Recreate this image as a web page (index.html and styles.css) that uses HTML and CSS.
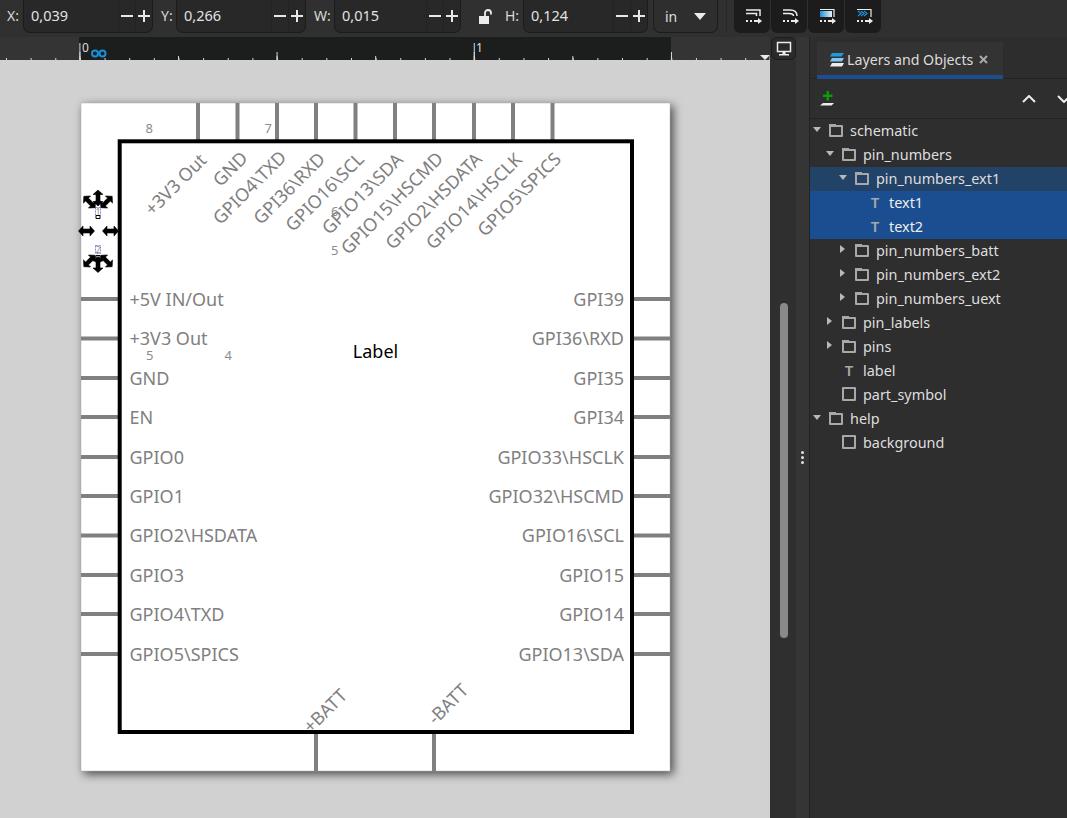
FILE: index.html
```html
<!DOCTYPE html>
<html lang="en">
<head>
<meta charset="utf-8">
<title>Layers and Objects</title>
<link rel="stylesheet" href="styles.css">
</head>
<body>
<div class="app">
  <header class="toolbar">
    <span class="lbl lbl-x">X:</span>
    <div class="field f-x"><span class="val">0,039</span><i class="step minus"></i><i class="step plus"></i></div>
    <span class="lbl lbl-y">Y:</span>
    <div class="field f-y"><span class="val">0,266</span><i class="step minus"></i><i class="step plus"></i></div>
    <span class="lbl lbl-w">W:</span>
    <div class="field f-w"><span class="val">0,015</span><i class="step minus"></i><i class="step plus"></i></div>
    <div class="lock">
      <svg width="14" height="16" viewBox="0 0 14 16"><path class="ico-fill" d="M1 7h10v8H1z"/><path class="ico-line" d="M7 7V4a3 3 0 0 1 6 0v1.500" stroke-width="1.800"/></svg>
    </div>
    <span class="lbl lbl-h">H:</span>
    <div class="field f-h"><span class="val">0,124</span><i class="step minus"></i><i class="step plus"></i></div>
    <div class="unit"><span>in</span><svg width="12" height="7" viewBox="0 0 12 7"><path class="ico-fill" d="M0 0h12L6 7z"/></svg></div>
    <div class="sep"></div>
    <div class="btn-group">
      <div class="tbtn"><svg width="36" height="33" viewBox="0 0 36 33">
        <path class="ico-line" d="M12 10H26V16M12 13.500H22.500V16" stroke-width="1.500"/>
        <path class="ico-line" d="M12 21H14M16 21H18M20 21H25" stroke-width="1.800"/><path class="ico-fill" d="M24 18l4 3-4 3z"/></svg></div>
      <div class="tbtn"><svg width="36" height="33" viewBox="0 0 36 33">
        <path class="ico-line" d="M12 10H19Q26 10 26 16M12 13.500H18Q22.500 13.500 22.500 16" stroke-width="1.500"/>
        <path class="ico-line" d="M12 21H14M16 21H18M20 21H25" stroke-width="1.800"/><path class="ico-fill" d="M24 18l4 3-4 3z"/></svg></div>
      <div class="tbtn"><svg width="36" height="33" viewBox="0 0 36 33">
        <defs><linearGradient id="bluefade"><stop offset="0" stop-color="#1b8fd8"/><stop offset="1" stop-color="#e6f2fa"/></linearGradient></defs>
        <path fill="url(#bluefade)" d="M12 11H24V17H12z"/>
        <path class="ico-line" d="M12 9.500H26V17" stroke-width="1.200"/>
        <path class="ico-line" d="M12 21H14M16 21H18M20 21H25" stroke-width="1.800"/><path class="ico-fill" d="M24 18l4 3-4 3z"/></svg></div>
      <div class="tbtn"><svg width="36" height="33" viewBox="0 0 36 33">
        <path class="ico-blue" d="M13 11l3 2.500-3 2.500M16 11l3 2.500-3 2.500M19 11l3 2.500-3 2.500" stroke-width="1.200"/>
        <path class="ico-line" d="M12 9.500H26V17" stroke-width="1.200"/>
        <path class="ico-line" d="M12 21H14M16 21H18M20 21H25" stroke-width="1.800"/><path class="ico-fill" d="M24 18l4 3-4 3z"/></svg></div>
    </div>
  </header>

  <div class="main">
    <section class="work">
      <div class="ruler">
        <span class="rnum rnum-0">0</span>
        <span class="rnum rnum-1">1</span>
        <svg class="guide-mark" width="16" height="9" viewBox="0 0 16 9"><circle class="ico-blue" cx="4" cy="4.500" r="3" stroke-width="2"/><circle class="ico-blue" cx="11.500" cy="4.500" r="3" stroke-width="2"/></svg>
        <svg class="ruler-mark" width="10" height="5" viewBox="0 0 10 5"><path class="ico-fill" d="M0 0h10L5 5z"/></svg>
      </div>
      <svg class="canvas" width="770" height="758" viewBox="0 60 770 758">
        <rect class="page" x="81" y="103" width="589" height="668"/>

        <g class="pins">
          <path d="M198 103V140M237.500 103V140M277 103V140M316 103V140M355.500 103V140M395 103V140M434 103V140M474 103V140M513 103V140M552.500 103V140"/>
          <path d="M81 299H118M81 338.500H118M81 378H118M81 417H118M81 457H118M81 496H118M81 535.500H118M81 575H118M81 614H118M81 654H118"/>
          <path d="M634 299H670M634 338.500H670M634 378H670M634 417H670M634 457H670M634 496H670M634 535.500H670M634 575H670M634 614H670M634 654H670"/>
          <path d="M316 734V771M434 734V771"/>
        </g>
        <rect class="body" x="119.700" y="141.300" width="512.300" height="590.700"/>

        <g class="num">
          <text x="145.500" y="133">8</text>
          <text x="264.500" y="133">7</text>
          <text x="146" y="360">5</text>
          <text x="224.500" y="360">4</text>
          <text x="331" y="216">6</text>
          <text x="331" y="255">5</text>
        </g>

        <g class="plabel" transform="translate(-.5 .5)">
          <text x="130" y="305">+5V IN/Out</text>
          <text x="130" y="344.500">+3V3 Out</text>
          <text x="130" y="384">GND</text>
          <text x="130" y="423">EN</text>
          <text x="130" y="463">GPIO0</text>
          <text x="130" y="502">GPIO1</text>
          <text x="130" y="541.500">GPIO2\HSDATA</text>
          <text x="130" y="581">GPIO3</text>
          <text x="130" y="620">GPIO4\TXD</text>
          <text x="130" y="660">GPIO5\SPICS</text>
        </g>
        <g class="plabel end" transform="translate(0 .5)">
          <text x="624" y="305">GPI39</text>
          <text x="624" y="344.500">GPI36\RXD</text>
          <text x="624" y="384">GPI35</text>
          <text x="624" y="423">GPI34</text>
          <text x="624" y="463">GPIO33\HSCLK</text>
          <text x="624" y="502">GPIO32\HSCMD</text>
          <text x="624" y="541.500">GPIO16\SCL</text>
          <text x="624" y="581">GPIO15</text>
          <text x="624" y="620">GPIO14</text>
          <text x="624" y="660">GPIO13\SDA</text>
        </g>
        <g class="plabel" transform="translate(2.500 2.500)">
          <text transform="translate(150 214) rotate(-45)">+3V3 Out</text>
          <text transform="translate(218 185) rotate(-45)">GND</text>
          <text transform="translate(218 223) rotate(-45)">GPIO4\TXD</text>
          <text transform="translate(258.500 223) rotate(-45)">GPI36\RXD</text>
          <text transform="translate(290.500 230) rotate(-45)">GPIO16\SCL</text>
          <text transform="translate(327 233) rotate(-45)">GPIO13\SDA</text>
          <text transform="translate(346 253) rotate(-45)">GPIO15\HSCMD</text>
          <text transform="translate(390.500 248) rotate(-45)">GPIO2\HSDATA</text>
          <text transform="translate(431 248) rotate(-45)">GPIO14\HSCLK</text>
          <text transform="translate(482.500 235) rotate(-45)">GPIO5\SPICS</text>
        </g>
        <g class="plabel">
          <text transform="translate(311 734) rotate(-45)">+BATT</text>
          <text transform="translate(435.500 725.500) rotate(-45)">-BATT</text>
        </g>
        <text class="part-label" x="375.500" y="358">Label</text>

        <g class="sel-text">
          <text x="98" y="215">1</text>
          <text x="98" y="253">2</text>
        </g>
        <path class="sel-box" d="M95.500 207.500h5v8h-5zM95.500 245.500h5v8h-5z"/>
        <path class="sel-node" d="M96 215.500h4v3h-4zM96 255.500h4v3h-4z"/>
        <defs>
          <path id="handle" d="M-8 0l4.500-5v3h7v-3L8 0 3.500 5v-3h-7v3z"/>
        </defs>
        <g class="handles">
          <use href="#handle" transform="translate(98 198) rotate(90)"/>
          <use href="#handle" transform="translate(89.500 202) rotate(45)"/>
          <use href="#handle" transform="translate(106.500 202) rotate(-45)"/>
          <use href="#handle" transform="translate(86.500 231)"/>
          <use href="#handle" transform="translate(110.500 231)"/>
          <use href="#handle" transform="translate(98 264.500) rotate(90)"/>
          <use href="#handle" transform="translate(89.500 261) rotate(-45)"/>
          <use href="#handle" transform="translate(106.500 261) rotate(45)"/>
        </g>
      </svg>
    </section>

    <div class="vscroll">
      <div class="track">
        <div class="display-btn">
          <svg width="16" height="15" viewBox="0 0 16 15"><path class="ico-line" d="M1.500 1.500h13v9h-13z" stroke-width="1.500"/><path class="ico-fill" d="M3 13h10v1.500H3zM6.500 11h3v2h-3z"/></svg>
        </div>
        <div class="thumb"></div>
      </div>
      <div class="grip"><i></i><i></i><i></i></div>
    </div>

    <aside class="panel">
      <div class="tabs">
        <div class="tab">
          <svg width="16" height="14" viewBox="0 0 16 14">
            <path fill="#1f9bdc" d="M3 0h12l-2.500 3.500H1z"/>
            <path fill="#7cc8ee" d="M3 5h12l-2 3.500H1z"/>
            <path fill="#eeeeee" d="M3 10h12l-2 3.500H1z"/>
          </svg>
          <span>Layers and Objects</span>
          <svg class="tab-x" width="9" height="9" viewBox="0 0 9 9"><path d="M1 1l7 7M8 1L1 8"/></svg>
        </div>
      </div>
      <div class="panel-tools">
        <svg width="16" height="16" viewBox="0 0 16 16"><path fill="#0a9a0a" d="M6.500 0h2.500v3.500h3.500V6H9v3.500H6.500V6H3V3.500h3.500z"/><path class="ico-fill" d="M3 12h11l-2.500 2.500H0z"/></svg>
        <div class="chevrons">
          <svg width="14" height="8" viewBox="0 0 14 8"><path class="ico-line" d="M1 7l6-6 6 6" stroke-width="2"/></svg>
          <svg width="14" height="8" viewBox="0 0 14 8"><path class="ico-line" d="M1 1l6 6 6-6" stroke-width="2"/></svg>
        </div>
      </div>
      <ul class="tree">
        <li class="row l0"><i class="arrow open"></i><i class="ic folder"></i><span>schematic</span></li>
        <li class="row l1"><i class="arrow open"></i><i class="ic folder"></i><span>pin_numbers</span></li>
        <li class="row l2 hl"><i class="arrow open"></i><i class="ic folder"></i><span>pin_numbers_ext1</span></li>
        <li class="row l3 sel"><i class="arrow"></i><i class="ic ttype">T</i><span>text1</span></li>
        <li class="row l3 sel"><i class="arrow"></i><i class="ic ttype">T</i><span>text2</span></li>
        <li class="row l2"><i class="arrow shut"></i><i class="ic folder"></i><span>pin_numbers_batt</span></li>
        <li class="row l2"><i class="arrow shut"></i><i class="ic folder"></i><span>pin_numbers_ext2</span></li>
        <li class="row l2"><i class="arrow shut"></i><i class="ic folder"></i><span>pin_numbers_uext</span></li>
        <li class="row l1"><i class="arrow shut"></i><i class="ic folder"></i><span>pin_labels</span></li>
        <li class="row l1"><i class="arrow shut"></i><i class="ic folder"></i><span>pins</span></li>
        <li class="row l1"><i class="arrow"></i><i class="ic ttype">T</i><span>label</span></li>
        <li class="row l1"><i class="arrow"></i><i class="ic square"></i><span>part_symbol</span></li>
        <li class="row l0"><i class="arrow open"></i><i class="ic folder"></i><span>help</span></li>
        <li class="row l1"><i class="arrow"></i><i class="ic square"></i><span>background</span></li>
      </ul>
    </aside>
  </div>
</div>
</body>
</html>
```

FILE: styles.css
```css
* { box-sizing: border-box; }
html, body { margin: 0; height: 100%; overflow: hidden; background: #2e2e2e; }
body { font-family: "Noto Sans", "Open Sans", sans-serif; font-size: 14px; color: #dedede; }
.app { width: 1067px; height: 818px; display: flex; flex-direction: column; overflow: hidden; }

.ico-fill { fill: #ececec; }
.ico-line { fill: none; stroke: #ececec; }
.ico-blue { fill: none; stroke: #1a8fd6; }

/* Top toolbar */
.toolbar { height: 37px; flex: none; display: flex; align-items: flex-start; background: #303030; padding-left: 7px; }
.lbl { height: 33px; line-height: 32px; color: #d8d8d8; flex: none; }
.lbl-x { width: 16px; }
.lbl-y { width: 15px; margin-left: 8px; }
.lbl-w { width: 20px; margin-left: 8px; }
.lbl-h { width: 18px; }
.field { height: 33px; flex: none; margin-top: 0; display: flex; align-items: stretch; background: #282828; border: 1px solid #1c1c1c; border-top: 0; border-radius: 0 0 7px 7px; }
.f-x, .f-y { width: 130px; }
.f-w { width: 127px; }
.f-h { width: 125px; }
.val { flex: 1; padding-left: 7px; line-height: 31px; font-size: 14.500px; color: #e2e2e2; }
.step { width: 17px; flex: none; border-left: 1px solid #232323; display: block; }
.minus { background: linear-gradient(#e8e8e8, #e8e8e8) center 15px / 12px 2px no-repeat; }
.plus {
  background:
    linear-gradient(#e8e8e8, #e8e8e8) center 15px / 12px 2px no-repeat,
    linear-gradient(#e8e8e8, #e8e8e8) center 10px / 2px 12px no-repeat;
}
.lock { width: 44px; height: 33px; flex: none; display: flex; align-items: center; padding-left: 17px; }
.unit { width: 65px; height: 33px; flex: none; margin-left: 5px; display: flex; align-items: center; justify-content: space-between; padding: 0 11px; background: #2e2e2e; border: 1px solid #1c1c1c; border-top: 0; border-radius: 0 0 7px 7px; }
.sep { width: 1px; height: 33px; flex: none; margin: 0 7px 0 8px; background: #282828; }
.btn-group { display: flex; gap: 1px; flex: none; }
.tbtn { width: 36px; height: 33px; background: #1c1c1c; border-radius: 0 0 6px 6px; display: flex; }

/* Main */
.main { flex: 1; display: flex; min-height: 0; }
.work { width: 770px; flex: none; display: flex; flex-direction: column; }
.ruler {
  position: relative; height: 23px; flex: none; background-color: #343434;
  background-image:
    linear-gradient(90deg, #d8d8d8 1px, transparent 1px),
    linear-gradient(90deg, #d8d8d8 1px, transparent 1px),
    linear-gradient(90deg, #d8d8d8 1px, transparent 1px),
    linear-gradient(90deg, #d8d8d8 1px, transparent 1px),
    linear-gradient(#1c1e1e, #1c1e1e);
  background-size: 394.400px 17px, 197.200px 8px, 98.600px 4px, 24.650px 2px, 592px 100%;
  background-position: 79.400px 100%, 79.400px 100%, 79.400px 100%, 6px 100%, 79px 0;
  background-repeat: repeat-x, repeat-x, repeat-x, repeat-x, no-repeat;
}
.rnum { position: absolute; top: 4px; font-size: 12px; line-height: 14px; color: #dcdcdc; }
.rnum-0 { left: 82px; }
.rnum-1 { left: 476px; }
.guide-mark { position: absolute; left: 91px; top: 12px; }
.ruler-mark { position: absolute; left: 760px; top: 18px; }
.canvas { display: block; flex: 1; background: #d1d1d1; }
.page { fill: #fff; stroke: #b0b0b0; stroke-width: .5; filter: drop-shadow(3px 3px 5px rgba(0, 0, 0, .65)); }
.pins path { fill: none; stroke: #808080; stroke-width: 4; }
.body { fill: #fff; stroke: #000; stroke-width: 4; }
.num text { font: 13px "Noto Sans", sans-serif; fill: #8c8c8c; }
.plabel text { font: 18px "Noto Sans", sans-serif; fill: #808080; }
.plabel.end text { text-anchor: end; }
.part-label { font: 18px "Noto Sans", sans-serif; fill: #000; text-anchor: middle; }
.sel-text text { font: 8px "Noto Sans", sans-serif; fill: #888; text-anchor: middle; }
.sel-box { fill: none; stroke: #3b3bbb; stroke-width: .6; stroke-dasharray: 2 1; }
.sel-node { fill: #fff; stroke: #000; stroke-width: 1; }
.handles use { fill: #000; stroke: #000; stroke-width: .6; }

/* Scroll column */
.vscroll { width: 40px; flex: none; display: flex; background: #353535; border-right: 1px solid #232323; }
.track { width: 26px; flex: none; background: #2f2f2f; position: relative; }
.display-btn { position: absolute; left: 1px; top: 0; width: 25px; height: 23px; background: #2a2a2a; border: 1px solid #1c1c1c; border-radius: 6px; display: flex; align-items: center; justify-content: center; }
.thumb { position: absolute; left: 10px; top: 266px; width: 8px; height: 335px; background: #8a8a8a; border-radius: 4px; }
.grip { flex: 1; display: flex; flex-direction: column; align-items: center; justify-content: center; gap: 2px; padding-top: 60px; }
.grip i { width: 3px; height: 3px; border-radius: 50%; background: #e0e0e0; }

/* Panel */
.panel { flex: 1; min-width: 0; display: flex; flex-direction: column; background: #2e2e2e; overflow: hidden; }
.tabs { height: 42px; flex: none; padding: 5px 0 0 7px; background: #2d2d2d; border-bottom: 1px solid #232323; display: flex; }
.tab { width: 186px; height: 37px; padding: 2px 0 0 12px; display: flex; align-items: center; background: #333; border-bottom: 4px solid #1a4e91; font-size: 14.200px; color: #dcdcdc; gap: 2px; }
.tab-x { margin-left: 4px; }
.tab-x path { stroke: #a8a8a8; stroke-width: 2; fill: none; }
.panel-tools { height: 40px; flex: none; display: flex; align-items: center; justify-content: space-between; padding: 0 0 0 10px; border-bottom: 1px solid #232323; }
.chevrons { display: flex; gap: 21px; margin-right: -4px; }
.tree { list-style: none; margin: 0; padding: 0; }
.row { height: 24px; padding-bottom: 2px; display: flex; align-items: center; color: #dedede; font-size: 14.400px; }
.l0 { padding-left: 3px; }
.l1 { padding-left: 16px; }
.l2 { padding-left: 29px; }
.l3 { padding-left: 42px; }
.hl { background: #224268; }
.sel { background: #1a4e91; color: #eee; }
.arrow { width: 16px; flex: none; position: relative; height: 10px; }
.arrow.open::before { content: ""; position: absolute; left: 0; top: 2px; border-left: 4.500px solid transparent; border-right: 4.500px solid transparent; border-top: 5px solid #b8b8b8; }
.arrow.shut::before { content: ""; position: absolute; left: 1px; top: 0; border-top: 4.500px solid transparent; border-bottom: 4.500px solid transparent; border-left: 5px solid #b8b8b8; }
.ic { width: 14px; height: 12px; flex: none; margin-right: 7px; display: block; font-style: normal; }
.folder { border: 2px solid #a8a8a8; border-radius: 1px; position: relative; margin-top: 1px; }
.folder::before { content: ""; position: absolute; left: -2px; top: -3px; width: 7px; height: 2px; background: #a8a8a8; }
.square { height: 14px; border: 2px solid #a8a8a8; border-radius: 1px; }
.ttype { color: #a8a8a8; font-size: 15px; font-weight: 600; line-height: 12px; text-align: center; }
```
